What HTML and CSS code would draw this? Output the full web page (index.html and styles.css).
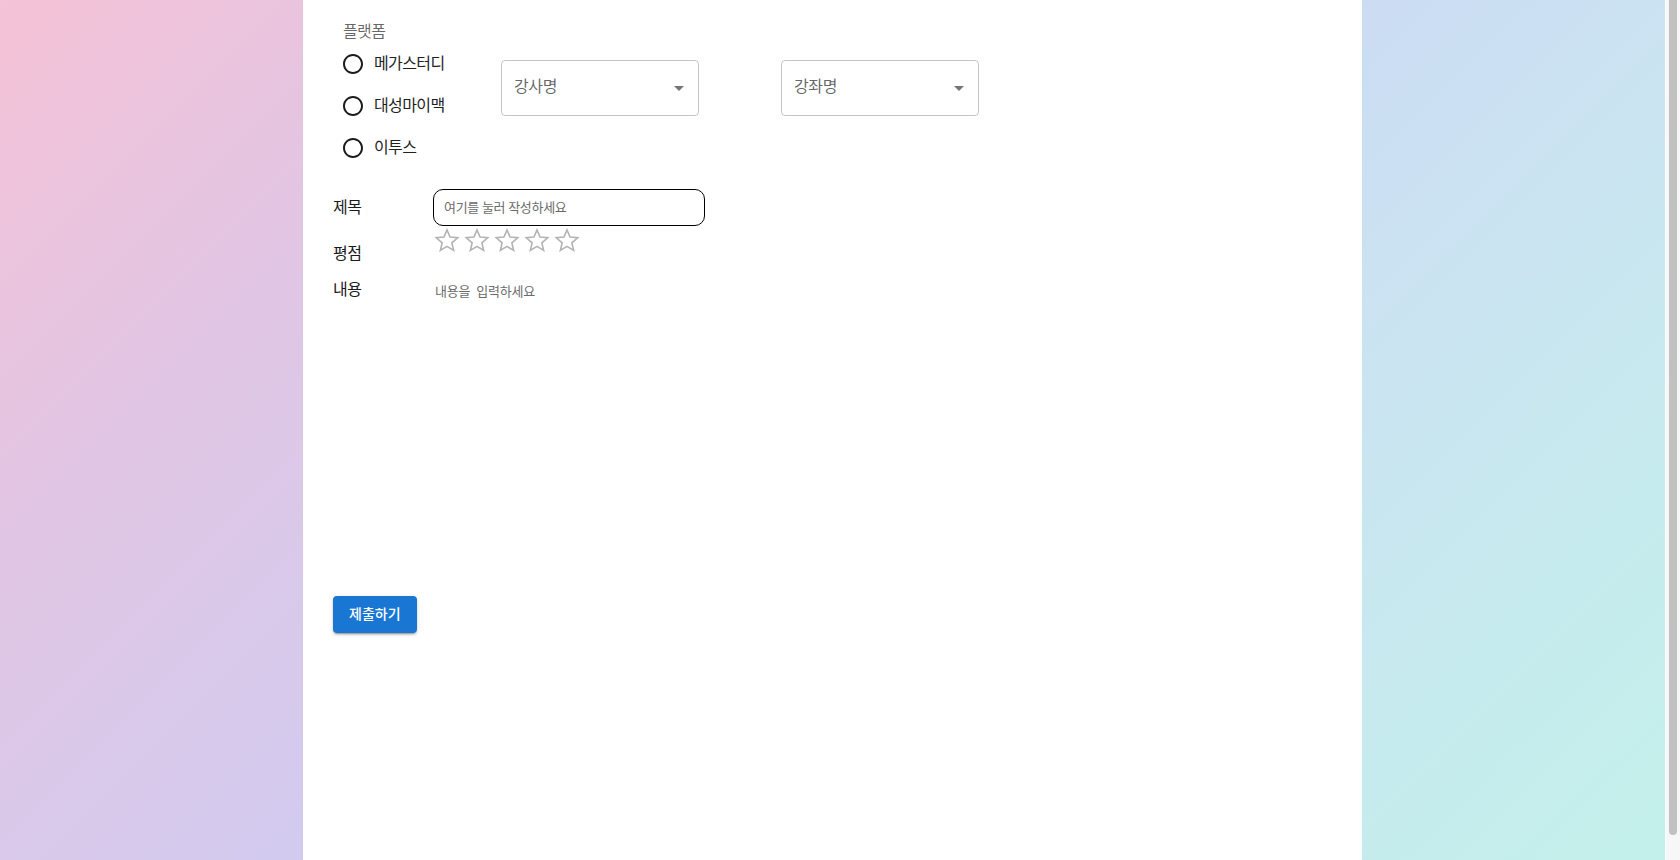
FILE: index.html
```html
<!DOCTYPE html>
<html lang="ko">
<head>
<meta charset="utf-8">
<title>강의 후기 작성</title>
<link rel="stylesheet" href="styles.css">
</head>
<body>
<div class="page">
  <main class="panel">
    <div class="top-row">
      <div class="platform">
        <div class="platform-label">플랫폼</div>
        <div class="radio-group">
          <label class="radio-item">
            <span class="radio-box"><svg viewBox="0 0 24 24" width="24" height="24"><path d="M12 2C6.48 2 2 6.48 2 12s4.48 10 10 10 10-4.48 10-10S17.52 2 12 2zm0 18c-4.42 0-8-3.58-8-8s3.58-8 8-8 8 3.58 8 8-3.58 8-8 8z"/></svg></span>
            <span class="radio-text">메가스터디</span>
          </label>
          <label class="radio-item">
            <span class="radio-box"><svg viewBox="0 0 24 24" width="24" height="24"><path d="M12 2C6.48 2 2 6.48 2 12s4.48 10 10 10 10-4.48 10-10S17.52 2 12 2zm0 18c-4.42 0-8-3.58-8-8s3.58-8 8-8 8 3.58 8 8-3.58 8-8 8z"/></svg></span>
            <span class="radio-text">대성마이맥</span>
          </label>
          <label class="radio-item">
            <span class="radio-box"><svg viewBox="0 0 24 24" width="24" height="24"><path d="M12 2C6.48 2 2 6.48 2 12s4.48 10 10 10 10-4.48 10-10S17.52 2 12 2zm0 18c-4.42 0-8-3.58-8-8s3.58-8 8-8 8 3.58 8 8-3.58 8-8 8z"/></svg></span>
            <span class="radio-text">이투스</span>
          </label>
        </div>
      </div>
      <div class="select select-teacher">
        <span class="select-label">강사명</span>
        <svg class="select-arrow" viewBox="0 0 24 24" width="24" height="24"><path d="M7 10l5 5 5-5z"/></svg>
      </div>
      <div class="select select-course">
        <span class="select-label">강좌명</span>
        <svg class="select-arrow" viewBox="0 0 24 24" width="24" height="24"><path d="M7 10l5 5 5-5z"/></svg>
      </div>
    </div>

    <div class="field-row title-row">
      <div class="field-label">제목</div>
      <input class="title-input" type="text" placeholder="여기를 눌러 작성하세요">
    </div>

    <div class="field-row rating-row">
      <div class="field-label rating-label">평점</div>
      <div class="stars">
        <svg class="star" viewBox="0 0 24 24" width="26" height="26"><polygon points="12,1.8 14.8,8.4 21.9,9 16.5,13.7 18.1,20.7 12,17 5.9,20.7 7.5,13.7 2.1,9 9.2,8.4"/></svg>
        <svg class="star" viewBox="0 0 24 24" width="26" height="26"><polygon points="12,1.8 14.8,8.4 21.9,9 16.5,13.7 18.1,20.7 12,17 5.9,20.7 7.5,13.7 2.1,9 9.2,8.4"/></svg>
        <svg class="star" viewBox="0 0 24 24" width="26" height="26"><polygon points="12,1.8 14.8,8.4 21.9,9 16.5,13.7 18.1,20.7 12,17 5.9,20.7 7.5,13.7 2.1,9 9.2,8.4"/></svg>
        <svg class="star" viewBox="0 0 24 24" width="26" height="26"><polygon points="12,1.8 14.8,8.4 21.9,9 16.5,13.7 18.1,20.7 12,17 5.9,20.7 7.5,13.7 2.1,9 9.2,8.4"/></svg>
        <svg class="star" viewBox="0 0 24 24" width="26" height="26"><polygon points="12,1.8 14.8,8.4 21.9,9 16.5,13.7 18.1,20.7 12,17 5.9,20.7 7.5,13.7 2.1,9 9.2,8.4"/></svg>
      </div>
    </div>

    <div class="field-row content-row">
      <div class="field-label">내용</div>
      <textarea class="content-input" placeholder="내용을  입력하세요"></textarea>
    </div>

    <button class="submit" type="button">제출하기</button>
  </main>
</div>
<div class="scrollbar" aria-hidden="true"><div class="scrollbar-thumb"></div></div>
</body>
</html>
```

FILE: styles.css
```css
* { box-sizing: border-box; }

html, body {
  margin: 0;
  padding: 0;
  height: 860px;
  overflow: hidden;
}

body {
  display: flex;
  font-family: Roboto, "Noto Sans CJK KR", sans-serif;
  color: rgba(0, 0, 0, 0.87);
}

.page {
  flex: 1;
  height: 860px;
  display: flex;
  justify-content: center;
  background: linear-gradient(135deg,
    #f5c2d6 0%,
    #e2c5e3 20%,
    #d9c9ea 35%,
    #d2caef 45%,
    #cbdbf3 53%,
    #cbe2f2 65%,
    #c6ebee 85%,
    #c3f0ea 100%);
}

.scrollbar {
  width: 15px;
  height: 860px;
  flex: none;
  background: #f7f7f7;
  border-left: 1px solid #ffffff;
  padding: 0 3px 0 3px;
}

.scrollbar-thumb {
  width: 8px;
  height: 835px;
  background: #c1c1c1;
  border-radius: 0 0 4px 4px;
}

.panel {
  width: 1059px;
  height: 860px;
  background: #ffffff;
  padding: 20px 30px 40px 30px;
}

/* top row: platform + selects */
.top-row {
  display: flex;
  align-items: flex-start;
}

.platform {
  width: 158px;
  margin-left: 10px;
  display: flex;
  flex-direction: column;
}

.platform-label {
  font-size: 16px;
  line-height: 23px;
  letter-spacing: -0.6px;
  color: rgba(0, 0, 0, 0.6);
}

.radio-group {
  display: flex;
  flex-direction: column;
}

.radio-item {
  display: flex;
  align-items: center;
  height: 42px;
  margin-left: -11px;
  cursor: pointer;
}

.radio-box {
  width: 42px;
  height: 42px;
  padding: 9px;
  display: flex;
}

.radio-box svg {
  fill: #1c1c1c;
}

.radio-text {
  font-size: 16px;
  line-height: 24px;
  letter-spacing: -0.6px;
  color: #1f1f1f;
}

.select {
  position: relative;
  width: 198px;
  height: 56px;
  margin-top: 40px;
  border: 1px solid rgba(0, 0, 0, 0.23);
  border-radius: 4px;
  display: flex;
  align-items: flex-start;
  padding: 14px 0 0 12px;
}

.select-course {
  margin-left: 82px;
}

.select-label {
  font-size: 16px;
  line-height: 23px;
  letter-spacing: -0.4px;
  color: rgba(0, 0, 0, 0.62);
}

.select-arrow {
  position: absolute;
  right: 7px;
  top: 15px;
  fill: rgba(0, 0, 0, 0.54);
}

/* form rows */
.field-row {
  display: flex;
  align-items: flex-start;
}

.field-label {
  width: 100px;
  flex: none;
  font-size: 16px;
  line-height: 24px;
  letter-spacing: -0.5px;
  color: #1a1a1a;
}

.title-row {
  margin-top: 20px;
  align-items: center;
}

.title-input {
  width: 272px;
  height: 37px;
  border: 1px solid #000000;
  border-bottom-width: 1.5px;
  border-radius: 10px;
  padding: 0 10px;
  font-family: inherit;
  font-size: 13px;
  letter-spacing: -0.3px;
  color: #333;
  outline: none;
  background: #fff;
}

.title-input::placeholder {
  color: #6b6b6b;
}

.rating-row {
  margin-top: 2px;
}

.rating-label {
  margin-top: 14px;
}

.stars {
  display: flex;
  gap: 4px;
  margin-left: 1px;
}

.star {
  fill: none;
  stroke: #b3b3b3;
  stroke-width: 1.5;
  stroke-linejoin: miter;
}

.content-row .field-label {
  margin-top: 12px;
}

.content-input {
  width: 900px;
  height: 300px;
  margin-top: 17px;
  margin-left: 2px;
  border: none;
  outline: none;
  resize: none;
  padding: 0;
  font-family: inherit;
  font-size: 13px;
  line-height: 18px;
  letter-spacing: -0.2px;
  background: transparent;
}

.content-input::placeholder {
  color: #6b6b6b;
}

.submit {
  display: block;
  margin-top: 13px;
  height: 36.5px;
  padding: 6px 16px;
  border: none;
  border-radius: 4px;
  background: #1976d2;
  color: #ffffff;
  font-family: inherit;
  font-size: 14px;
  font-weight: 500;
  line-height: 24.5px;
  box-shadow: 0px 3px 1px -2px rgba(0,0,0,0.2), 0px 2px 2px 0px rgba(0,0,0,0.14), 0px 1px 5px 0px rgba(0,0,0,0.12);
  cursor: pointer;
}
```
